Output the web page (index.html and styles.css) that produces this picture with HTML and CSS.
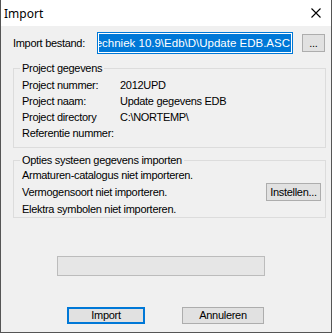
FILE: index.html
```html
<!DOCTYPE html>
<html lang="nl">
<head>
  <meta charset="UTF-8">
  <title>Import</title>
  <link rel="stylesheet" href="styles.css">
</head>
<body>
  <div class="window">
    <div class="titlebar">
      <span class="title">Import</span>
      <svg class="close" width="10" height="10" viewBox="0 0 10 10">
        <path d="M0.5 0.5 L9.5 9.5 M9.5 0.5 L0.5 9.5" stroke="#000" stroke-width="1.1" fill="none"/>
      </svg>
    </div>
    <div class="content">
      <div class="file-row">
        <span class="file-label">Import bestand:</span>
        <div class="file-input">
          <div class="selection"><span>Techniek 10.9\Edb\D\Update EDB.ASC</span></div>
        </div>
        <button class="btn browse-btn">...</button>
      </div>

      <fieldset class="group project">
        <legend>Project gegevens</legend>
        <div class="info-row"><span class="key">Project nummer:</span><span>2012UPD</span></div>
        <div class="info-row"><span class="key">Project naam:</span><span>Update gegevens EDB</span></div>
        <div class="info-row"><span class="key">Project directory</span><span>C:\NORTEMP\</span></div>
        <div class="info-row"><span class="key">Referentie nummer:</span><span></span></div>
      </fieldset>

      <fieldset class="group options">
        <legend>Opties systeen gegevens importen</legend>
        <div class="option-row">Armaturen-catalogus niet importeren.</div>
        <div class="option-row">
          <span>Vermogensoort niet importeren.</span>
          <button class="btn settings-btn">Instellen...</button>
        </div>
        <div class="option-row">Elektra symbolen niet importeren.</div>
      </fieldset>

      <div class="progress"></div>

      <div class="actions">
        <button class="btn action-btn default">Import</button>
        <button class="btn action-btn cancel">Annuleren</button>
      </div>
    </div>
  </div>
</body>
</html>
```

FILE: styles.css
```css
* {
    box-sizing: border-box;
}
body {
    margin: 0;
    background: #ffffff;
    font-family: "Liberation Sans", Arial, sans-serif;
    font-size: 11px;
    letter-spacing: -0.3px;
    color: #000000;
}
.window {
    width: 332px;
    height: 333px;
    background: #f0f0f0;
    border: 1px solid #555555;
    border-top: none;
}
.titlebar {
    height: 26px;
    background: #ffffff;
    display: flex;
    align-items: center;
    justify-content: space-between;
    padding: 0 10px 0 3px;
}
.title {
    font-family: "Noto Sans", sans-serif;
    font-size: 12px;
    letter-spacing: 0;
}
.close {
    display: block;
}
.content {
    padding-left: 12px;
}
.file-row {
    display: flex;
    align-items: center;
    height: 22px;
    margin-top: 6px;
}
.file-label {
    width: 84px;
}
.file-input {
    width: 196px;
    height: 22px;
    border: 1px solid #0078d7;
    padding: 1px;
    background: #ffffff;
}
.selection {
    height: 100%;
    background: #0078d7;
    color: #ffffff;
    font-size: 11.5px;
    letter-spacing: 0;
    display: flex;
    align-items: center;
    justify-content: flex-end;
    overflow: hidden;
    white-space: nowrap;
    padding-right: 1px;
}
.btn {
    font-family: "Liberation Sans", Arial, sans-serif;
    font-size: 11px;
    letter-spacing: -0.3px;
    color: #000000;
    background: #e1e1e1;
    border: 1px solid #adadad;
    padding: 0;
    margin: 0;
}
.browse-btn {
    width: 23px;
    height: 18px;
    margin-left: 9px;
    line-height: 14px;
}
.group {
    width: 313px;
    margin: 0;
    border: 1px solid #dcdcdc;
    padding: 3px 4px 6px 6px;
}
.group legend {
    padding: 0 2px;
    line-height: 12px;
}
.project {
    margin-top: 8px;
}
.info-row {
    display: flex;
    line-height: 16px;
    padding-left: 2px;
}
.key {
    width: 98px;
}
.options {
    margin-top: 6px;
    padding-top: 0;
    padding-bottom: 0;
}
.option-row {
    display: flex;
    align-items: center;
    justify-content: space-between;
    height: 17px;
    padding-left: 2px;
}
.settings-btn {
    width: 55px;
    height: 18px;
}
.progress {
    width: 208px;
    height: 20px;
    margin: 38px 0 0 44px;
    background: #e6e6e6;
    border: 1px solid #bcbcbc;
}
.actions {
    display: flex;
    margin: 31px 0 0 54px;
}
.action-btn {
    height: 17px;
    line-height: 13px;
}
.default {
    width: 78px;
    border: 2px solid #0078d7;
}
.cancel {
    width: 82px;
    margin-left: 37px;
}
```
